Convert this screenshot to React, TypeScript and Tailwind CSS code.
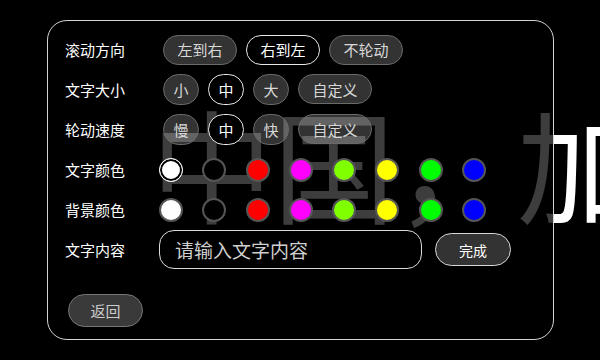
import React from "react";

const font = "font-['Noto_Sans_CJK_SC','Noto_Sans',sans-serif]";

function Pill({ label, selected, wide }: { label: string; selected?: boolean; wide?: boolean }) {
  return (
    <div
      className={
        "flex items-center justify-center rounded-full text-[15px] leading-none " +
        (wide ? "w-[74px] h-[30px] " : "w-[36px] h-[31px] ") +
        (selected
          ? "bg-black border-[1.5px] border-[#e8e8e8] text-white"
          : "bg-white/20 border-[1.5px] border-[#6a6a6a] text-[#d8d8d8]")
      }
    >
      {label}
    </div>
  );
}

const colors = ["#ffffff", "#000000", "#ff0000", "#ff00ff", "#80ff00", "#ffff00", "#00ff00", "#0000ff"];

function ColorRow({ selected }: { selected?: number }) {
  return (
    <div className="flex items-center gap-[19.3px]">
      {colors.map((c, i) => (
        <div
          key={i}
          className={
            "w-6 h-6 rounded-full " +
            (i === selected
              ? "border-[1.5px] border-white shadow-[inset_0_0_0_2px_#000]"
              : "border-2 border-[#555555]")
          }
          style={{ backgroundColor: c }}
        />
      ))}
    </div>
  );
}

function Row({ label, children }: { label: string; children: React.ReactNode }) {
  return (
    <div className="flex items-center h-[40px]">
      <div className="w-[94px] shrink-0 text-[15px] text-white leading-none">{label}</div>
      {children}
    </div>
  );
}

export default function App() {
  return (
    <div className={"relative w-[600px] h-[360px] bg-black overflow-hidden " + font}>
      <div className="absolute left-[151px] top-[100px] text-[122px] leading-none text-white whitespace-nowrap">
        中国，加油
      </div>
      <div className="relative w-full h-full flex items-center justify-center">
        <div className="w-[507px] h-[320px] rounded-[20px] border-[1.5px] border-[#d4d4d4] bg-black/[0.76] pt-[8.5px] pl-[17.5px] flex flex-col">
          <Row label="滚动方向">
            <div className="flex gap-[9px] ml-[4px]">
              <Pill label="左到右" wide />
              <Pill label="右到左" wide selected />
              <Pill label="不轮动" wide />
            </div>
          </Row>
          <Row label="文字大小">
            <div className="flex gap-[9px] ml-[4px]">
              <Pill label="小" />
              <Pill label="中" selected />
              <Pill label="大" />
              <Pill label="自定义" wide />
            </div>
          </Row>
          <Row label="轮动速度">
            <div className="flex gap-[9px] ml-[4px]">
              <Pill label="慢" />
              <Pill label="中" selected />
              <Pill label="快" />
              <Pill label="自定义" wide />
            </div>
          </Row>
          <Row label="文字颜色">
            <ColorRow selected={0} />
          </Row>
          <Row label="背景颜色">
            <ColorRow />
          </Row>
          <Row label="文字内容">
            <div className="w-[263px] h-[39px] rounded-[15px] border-[1.5px] border-[#dcdcdc] bg-black flex items-center pl-[15px] text-[19px] text-[#cfcfcf] leading-none">
              请输入文字内容
            </div>
            <div className="ml-[13px] w-[76px] h-[33px] rounded-full bg-[#333333] border-[1.5px] border-[#d8d8d8] flex items-center justify-center text-[14px] text-white leading-none">
              完成
            </div>
          </Row>
          <div className="mt-[24px] ml-[3px] w-[75px] h-[33px] rounded-full bg-[#3a3a3a] border-[1.5px] border-[#777777] flex items-center justify-center text-[15px] text-[#cccccc] leading-none">
            返回
          </div>
        </div>
      </div>
    </div>
  );
}
